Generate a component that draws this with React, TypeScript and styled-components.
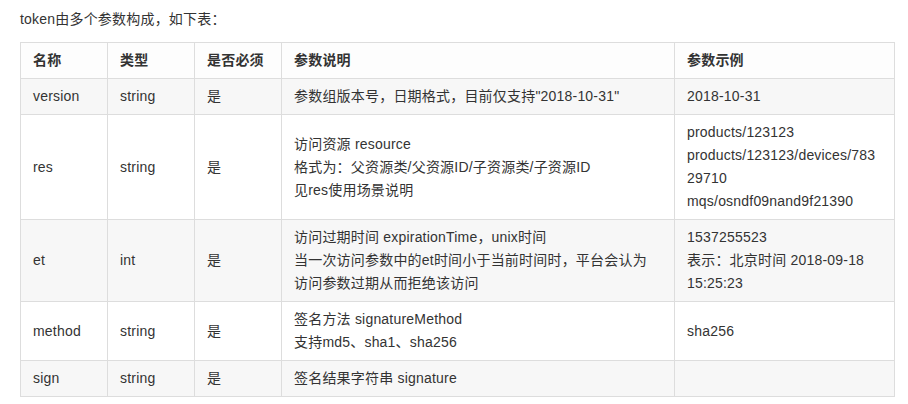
import styled, { createGlobalStyle } from "styled-components"

const GlobalStyle = createGlobalStyle`
  html, body {
    margin: 0;
    padding: 0;
    background: #fff;
  }
  body {
    font-family: "Liberation Sans", Arial, "Noto Sans CJK SC", sans-serif;
    font-size: 14px;
    letter-spacing: 0.2px;
    color: #333;
  }
`

const COLUMNS = [
  { title: "名称", width: 87 },
  { title: "类型", width: 87 },
  { title: "是否必须", width: 87 },
  { title: "参数说明", width: 393 },
  { title: "参数示例", width: 220 }
]

// lines are kept as they wrap in the doc page
const ROWS = [
  {
    name: "version",
    type: "string",
    required: "是",
    desc: ['参数组版本号，日期格式，目前仅支持"2018-10-31"'],
    example: ["2018-10-31"]
  },
  {
    name: "res",
    type: "string",
    required: "是",
    desc: ["访问资源 resource", "格式为：父资源类/父资源ID/子资源类/子资源ID", "见res使用场景说明"],
    example: ["products/123123", "products/123123/devices/783", "29710", "mqs/osndf09nand9f21390"]
  },
  {
    name: "et",
    type: "int",
    required: "是",
    desc: [
      "访问过期时间 expirationTime，unix时间",
      "当一次访问参数中的et时间小于当前时间时，平台会认为",
      "访问参数过期从而拒绝该访问"
    ],
    example: ["1537255523", "表示：北京时间 2018-09-18", "15:25:23"]
  },
  {
    name: "method",
    type: "string",
    required: "是",
    desc: ["签名方法 signatureMethod", "支持md5、sha1、sha256"],
    example: ["sha256"]
  },
  {
    name: "sign",
    type: "string",
    required: "是",
    desc: ["签名结果字符串 signature"],
    example: []
  }
]

export default function App() {
  return (
    <>
      <GlobalStyle />
      <Page>
        <Intro>token由多个参数构成，如下表：</Intro>
        <Table>
          <colgroup>
            {COLUMNS.map((c) => (
              <col key={c.title} style={{ width: c.width }} />
            ))}
          </colgroup>
          <thead>
            <tr>
              {COLUMNS.map((c) => (
                <HeadCell key={c.title}>{c.title}</HeadCell>
              ))}
            </tr>
          </thead>
          <tbody>
            {ROWS.map((row, i) => (
              <Row key={row.name} $striped={i % 2 === 0}>
                <Cell>{row.name}</Cell>
                <Cell>{row.type}</Cell>
                <Cell>{row.required}</Cell>
                <Cell>
                  {row.desc.map((line) => (
                    <Line key={line}>{line}</Line>
                  ))}
                </Cell>
                <Cell>
                  {row.example.map((line) => (
                    <Line key={line}>{line}</Line>
                  ))}
                </Cell>
              </Row>
            ))}
          </tbody>
        </Table>
      </Page>
    </>
  )
}

const Page = styled.div`
  padding: 8px 20px 0 20px;
`

const Intro = styled.p`
  margin: 0 0 12px 0;
  line-height: 22px;
`

const Table = styled.table`
  border-collapse: collapse;
  table-layout: fixed;
  width: 875px;
  border: 1px solid #ddd;
`

const HeadCell = styled.th`
  text-align: left;
  font-weight: bold;
  line-height: 23px;
  padding: 6px 12px;
  border: 1px solid #ddd;
  background: #fdfdfd;
  vertical-align: middle;
`

const Row = styled.tr<{ $striped: boolean }>`
  background: ${(p) => (p.$striped ? "#f7f7f7" : "#fff")};
`

const Cell = styled.td`
  line-height: 23px;
  padding: 6px 12px;
  border: 1px solid #ddd;
  vertical-align: middle;
`

const Line = styled.div`
  white-space: nowrap;
`
